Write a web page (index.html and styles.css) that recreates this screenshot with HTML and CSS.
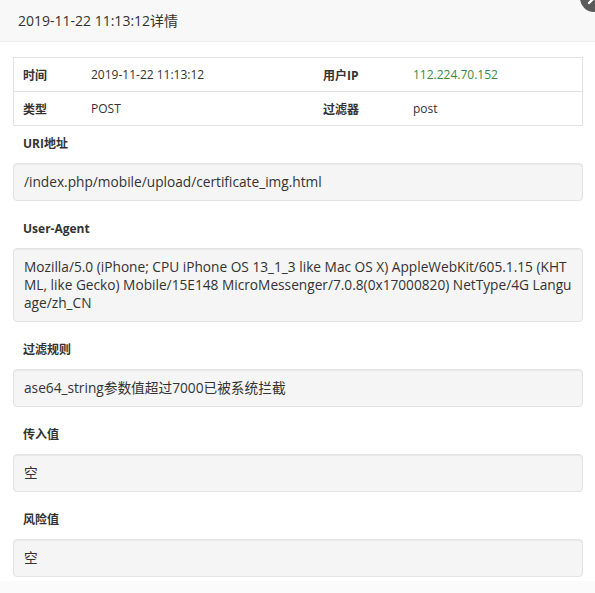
FILE: index.html
```html
<!DOCTYPE html>
<html>
<head>
<meta charset="utf-8">
<link rel="stylesheet" href="styles.css">
</head>
<body>
<div class="layer">
  <div class="header">2019-11-22 11:13:12详情</div>
  <span class="close"><svg width="30" height="30" viewBox="0 0 30 30"><circle cx="15" cy="15" r="14" fill="#5a5a5a"/><path d="M10 10 L20 20 M20 10 L10 20" stroke="#fff" stroke-width="2.4" stroke-linecap="round"/></svg></span>
  <div class="content">
    <table class="info">
      <tr>
        <td class="k c1">时间</td>
        <td class="c2">2019-11-22 11:13:12</td>
        <td class="k c3">用户IP</td>
        <td class="ip">112.224.70.152</td>
      </tr>
      <tr>
        <td class="k">类型</td>
        <td>POST</td>
        <td class="k">过滤器</td>
        <td>post</td>
      </tr>
    </table>
    <div class="label first">URI地址</div>
    <div class="well">/index.php/mobile/upload/certificate_img.html</div>
    <div class="label">User-Agent</div>
    <div class="well">Mozilla/5.0 (iPhone; CPU iPhone OS 13_1_3 like Mac OS X) AppleWebKit/605.1.15 (KHTML, like Gecko) Mobile/15E148 MicroMessenger/7.0.8(0x17000820) NetType/4G Language/zh_CN</div>
    <div class="label">过滤规则</div>
    <div class="well">ase64_string参数值超过7000已被系统拦截</div>
    <div class="label">传入值</div>
    <div class="well">空</div>
    <div class="label">风险值</div>
    <div class="well">空</div>
  </div>
  <div class="footer"></div>
</div>
</body>
</html>
```
FILE: styles.css
```css
html, body {
  margin: 0;
  padding: 0;
  background: #fff;
}
body {
  font-family: "Open Sans", "Noto Sans CJK SC", sans-serif;
  font-size: 12px;
  color: #333;
  overflow: hidden;
}
.layer {
  position: relative;
  width: 595px;
  height: 593px;
  overflow: hidden;
}
.header {
  height: 41px;
  line-height: 42px;
  padding-left: 18px;
  font-size: 14px;
  background: #f8f8f8;
  border-bottom: 1px solid #eee;
  color: #333;
}
.close {
  position: absolute;
  right: -14px;
  top: -17px;
  width: 30px;
  height: 30px;
}
.close svg { display: block; }
.content {
  padding: 15px 12px 0 13px;
}
.info {
  width: 100%;
  border-collapse: collapse;
  border: 1px solid #e2e2e2;
}
.info td {
  height: 33px;
  padding: 0 11px 0 9px;
  border-top: 1px solid #e2e2e2;
  border-bottom: 1px solid #e2e2e2;
}
.info .c1 { width: 48px; }
.info .c2 { width: 212px; }
.info .c3 { width: 70px; }
.k { font-weight: bold; }
.ip { color: #3a8a45; }
.label {
  font-weight: bold;
  line-height: 18px;
  margin: 19px 0 10px 10px;
}
.label.first { margin-top: 9px; }
.well {
  background: #f5f5f5;
  border: 1px solid #e3e3e3;
  border-radius: 4px;
  box-shadow: inset 0 1px 1px rgba(0,0,0,.05);
  padding: 9px 10px;
  font-size: 13.7px;
  line-height: 18px;
  word-break: break-all;
}
.footer {
  position: absolute;
  left: 0;
  right: 0;
  bottom: 0;
  height: 12px;
  background: #fbfbfb;
}
```
